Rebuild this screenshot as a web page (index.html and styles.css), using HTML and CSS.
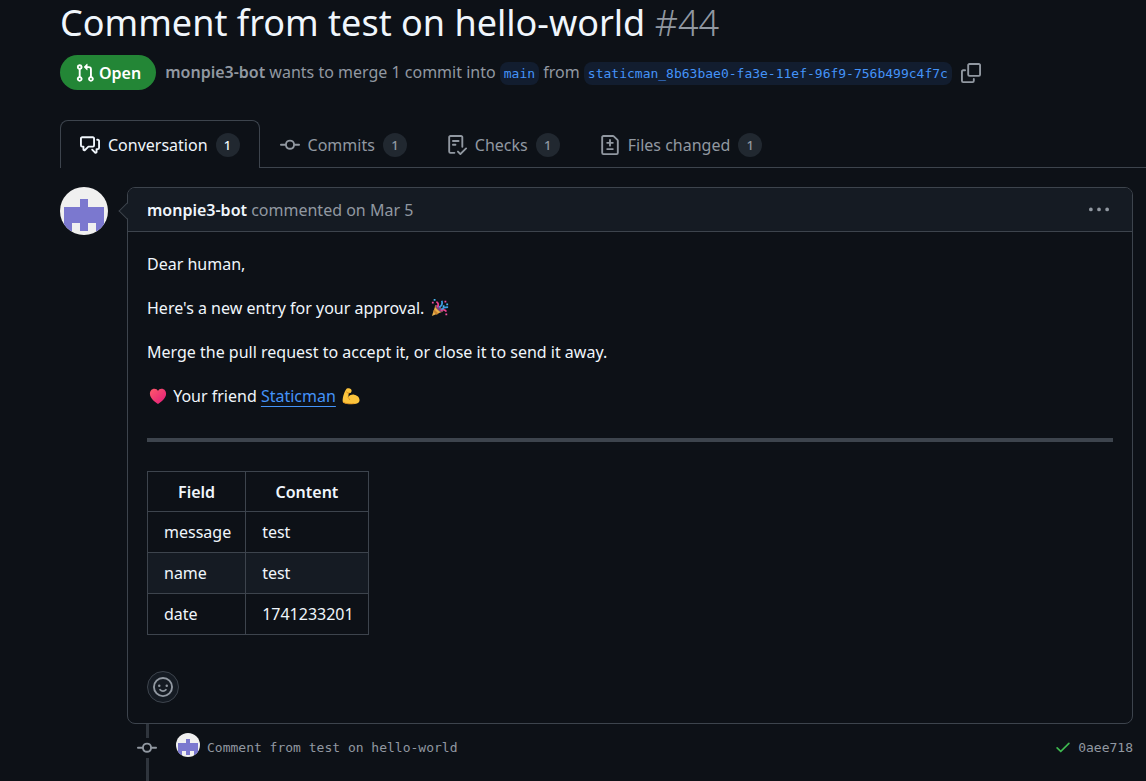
FILE: index.html
```html
<!DOCTYPE html>
<html lang="en">
<head>
  <meta charset="UTF-8" />
  <meta name="viewport" content="width=device-width, initial-scale=1.0"/>
  <title>Comment from test on hello-world #44</title>
  <link rel="stylesheet" href="styles.css">
</head>
<body>

  <!-- shared pixel avatar and commit icon -->
  <svg class="defs" width="0" height="0" aria-hidden="true">
    <symbol id="avatar" viewBox="0 0 48 48">
      <rect width="48" height="48" fill="#f0f0f0"/>
      <path fill="#7b78cf" d="M20 12h8v8h16v24h-8v-8h-8v8h-8v-8h-8v8H4V20h16z"/>
    </symbol>
    <symbol id="commit" viewBox="0 0 16 16">
      <path d="M11.93 8.5a4.002 4.002 0 0 1-7.86 0H.75a.75.75 0 0 1 0-1.5h3.32a4.002 4.002 0 0 1 7.86 0h3.32a.75.75 0 0 1 0 1.5Zm-1.43-.75a2.5 2.5 0 1 0-5 0 2.5 2.5 0 0 0 5 0Z"/>
    </symbol>
  </svg>

  <header class="pr-header">
    <h1>Comment from test on hello-world <span class="number">#44</span></h1>
    <div class="pr-meta">
      <span class="state">
        <svg class="icon" viewBox="0 0 16 16"><path d="M1.5 3.25a2.25 2.25 0 1 1 3 2.122v5.256a2.251 2.251 0 1 1-1.5 0V5.372A2.25 2.25 0 0 1 1.5 3.25Zm5.677-.177L9.573.677A.25.25 0 0 1 10 .854V2.5h1A2.5 2.5 0 0 1 13.5 5v5.628a2.251 2.251 0 1 1-1.5 0V5a1 1 0 0 0-1-1h-1v1.646a.25.25 0 0 1-.427.177L7.177 3.427a.25.25 0 0 1 0-.354ZM3.75 2.5a.75.75 0 1 0 0 1.5.75.75 0 0 0 0-1.5Zm0 9.5a.75.75 0 1 0 0 1.5.75.75 0 0 0 0-1.5Zm8.25.75a.75.75 0 1 0 1.5 0 .75.75 0 0 0-1.5 0Z"/></svg>
        Open
      </span>
      <p class="merge-info">
        <a class="author" href="#">monpie3-bot</a> wants to merge 1 commit into
        <a class="branch" href="#">main</a> from
        <a class="branch" href="#">staticman_8b63bae0-fa3e-11ef-96f9-756b499c4f7c</a>
      </p>
      <button class="icon-btn" type="button" aria-label="Copy branch name">
        <svg class="icon" viewBox="0 0 16 16"><path d="M0 6.75C0 5.784.784 5 1.75 5h1.5a.75.75 0 0 1 0 1.5h-1.5a.25.25 0 0 0-.25.25v7.5c0 .138.112.25.25.25h7.5a.25.25 0 0 0 .25-.25v-1.5a.75.75 0 0 1 1.5 0v1.5A1.75 1.75 0 0 1 9.25 16h-7.5A1.75 1.75 0 0 1 0 14.25Z"/><path d="M5 1.75C5 .784 5.784 0 6.75 0h7.5C15.216 0 16 .784 16 1.75v7.5A1.75 1.75 0 0 1 14.25 11h-7.5A1.75 1.75 0 0 1 5 9.25Zm1.75-.25a.25.25 0 0 0-.25.25v7.5c0 .138.112.25.25.25h7.5a.25.25 0 0 0 .25-.25v-7.5a.25.25 0 0 0-.25-.25Z"/></svg>
      </button>
    </div>
  </header>

  <nav class="tabs" aria-label="Pull request">
    <a class="tab selected" href="#" aria-current="page">
      <svg class="icon" viewBox="0 0 16 16"><path d="M1.75 1h8.5c.966 0 1.75.784 1.75 1.75v5.5A1.75 1.75 0 0 1 10.25 10H7.061l-2.574 2.573A1.458 1.458 0 0 1 2 11.543V10h-.25A1.75 1.75 0 0 1 0 8.25v-5.5C0 1.784.784 1 1.75 1ZM1.5 2.75v5.5c0 .138.112.25.25.25h1a.75.75 0 0 1 .75.75v2.19l2.72-2.72a.749.749 0 0 1 .53-.22h3.5a.25.25 0 0 0 .25-.25v-5.5a.25.25 0 0 0-.25-.25h-8.5a.25.25 0 0 0-.25.25Zm13 2a.25.25 0 0 0-.25-.25h-.5a.75.75 0 0 1 0-1.5h.5c.966 0 1.75.784 1.75 1.75v5.5A1.75 1.75 0 0 1 14.25 12H14v1.543a1.458 1.458 0 0 1-2.487 1.03L9.22 12.28a.749.749 0 0 1 .326-1.275.749.749 0 0 1 .734.215l2.22 2.22v-2.19a.75.75 0 0 1 .75-.75h1a.25.25 0 0 0 .25-.25Z"/></svg>
      Conversation <span class="counter">1</span>
    </a>
    <a class="tab" href="#">
      <svg class="icon"><use href="#commit"/></svg>
      Commits <span class="counter">1</span>
    </a>
    <a class="tab" href="#">
      <svg class="icon" viewBox="0 0 16 16"><path d="M2.5 1.75v11.5c0 .138.112.25.25.25h3.17a.75.75 0 0 1 0 1.5H2.75A1.75 1.75 0 0 1 1 13.25V1.75C1 .784 1.784 0 2.75 0h8.5C12.216 0 13 .784 13 1.75v7.736a.75.75 0 0 1-1.5 0V1.75a.25.25 0 0 0-.25-.25h-8.5a.25.25 0 0 0-.25.25Zm13.274 9.537v-.001l-4.557 4.45a.75.75 0 0 1-1.055-.008l-1.943-1.95a.75.75 0 0 1 1.062-1.058l1.419 1.425 4.026-3.932a.75.75 0 1 1 1.048 1.074ZM4.75 4h4.5a.75.75 0 0 1 0 1.5h-4.5a.75.75 0 0 1 0-1.5ZM4 7.75A.75.75 0 0 1 4.75 7h2a.75.75 0 0 1 0 1.5h-2A.75.75 0 0 1 4 7.75Z"/></svg>
      Checks <span class="counter">1</span>
    </a>
    <a class="tab" href="#">
      <svg class="icon" viewBox="0 0 16 16"><path d="M1 1.75C1 .784 1.784 0 2.75 0h7.586c.464 0 .909.184 1.237.513l2.914 2.914c.329.328.513.773.513 1.237v9.586A1.75 1.75 0 0 1 13.25 16H2.75A1.75 1.75 0 0 1 1 14.25Zm1.75-.25a.25.25 0 0 0-.25.25v12.5c0 .138.112.25.25.25h10.5a.25.25 0 0 0 .25-.25V4.664a.25.25 0 0 0-.073-.177l-2.914-2.914a.25.25 0 0 0-.177-.073ZM8 3.25a.75.75 0 0 1 .75.75v1.5h1.5a.75.75 0 0 1 0 1.5h-1.5v1.5a.75.75 0 0 1-1.5 0V7h-1.5a.75.75 0 0 1 0-1.5h1.5V4A.75.75 0 0 1 8 3.25Zm-3 8a.75.75 0 0 1 .75-.75h4.5a.75.75 0 0 1 0 1.5h-4.5a.75.75 0 0 1-.75-.75Z"/></svg>
      Files changed <span class="counter">1</span>
    </a>
  </nav>

  <main class="discussion">
    <div class="comment-row">
      <svg class="avatar" role="img" aria-label="monpie3-bot"><use href="#avatar"/></svg>
      <article class="comment">
        <header class="comment-header">
          <p><a class="author" href="#">monpie3-bot</a> commented on Mar 5</p>
          <button class="icon-btn" type="button" aria-label="Show options">
            <svg class="icon" viewBox="0 0 16 16"><path d="M8 9a1.5 1.5 0 1 0 0-3 1.5 1.5 0 0 0 0 3ZM1.5 9a1.5 1.5 0 1 0 0-3 1.5 1.5 0 0 0 0 3Zm13 0a1.5 1.5 0 1 0 0-3 1.5 1.5 0 0 0 0 3Z"/></svg>
          </button>
        </header>

        <div class="comment-body">
          <p>Dear human,</p>
          <p>Here's a new entry for your approval.
            <svg class="emoji" viewBox="0 0 20 20" role="img" aria-label="party popper">
              <path fill="#e8b04a" d="M5 7 1 19l12-5C12 10 9 7 5 7z"/>
              <path fill="#c9822d" d="m3.500 11.500 5 5-2.500 1-3.500-3.500zM5 7l8 7-2 1-7-6z"/>
              <ellipse cx="9" cy="10.500" rx="2" ry="5" transform="rotate(-45 9 10.500)" fill="#7a3f7d"/>
              <path fill="none" stroke="#e8418c" stroke-width="2" d="M7 9c2-2 1-5-1-6M11 13c2-2 5-1 6 1"/>
              <path fill="none" stroke="#3d9be0" stroke-width="2" d="M9 9c3-1 4-4 3-7M12 12c1-3 4-3 7-3"/>
              <path fill="#f04fa0" d="M1 3h2v2H1zM15 2h2v2h-2zM16 16h2v2h-2z"/>
              <path fill="#49b6ef" d="M3 0h2v2H3zM17 5h2v2h-2zM13 7h2v2h-2z"/>
            </svg></p>
          <p>Merge the pull request to accept it, or close it to send it away.</p>
          <p><svg class="emoji" viewBox="0 0 20 20" role="img" aria-label="heart">
              <defs><linearGradient id="heart" x1="0" y1="0" x2="1" y2="1"><stop offset="0" stop-color="#ff5a6b"/><stop offset="1" stop-color="#e0197a"/></linearGradient></defs>
              <path fill="url(#heart)" d="M10 19C7 17 1 12.500 1 7.500 1 4.500 3 2 6 2c2 0 3.200 1 4 2.500C10.800 3 12 2 14 2c3 0 5 2.500 5 5.500C19 12.500 13 17 10 19z"/>
            </svg>
            Your friend <a class="link" href="#">Staticman</a>
            <svg class="emoji" viewBox="0 0 20 20" role="img" aria-label="flexed biceps">
              <path fill="#fcc43c" d="M5 2c2-1 4-.5 5 .5 1 1 .8 2.500 0 3.500-.8.800-2 .8-2.500.8L7 11c2-2 4-3 6.500-2.500C17 9 19.500 11.500 19.500 14.500c0 3-2.500 4.500-7 4.500C7 19 2 18.500 1 17 0 14 2 6 5 2z"/>
              <path fill="none" stroke="#dd8d1c" stroke-linecap="round" d="M5 5.500c1 1 2 1.300 3 1.200M6.500 11.500c1 .5 2 1.500 2 2.500M1.500 17c3 2 8 2 12 1.500"/>
            </svg></p>

          <hr>

          <table>
            <thead>
              <tr><th>Field</th><th>Content</th></tr>
            </thead>
            <tbody>
              <tr><td>message</td><td>test</td></tr>
              <tr><td>name</td><td>test</td></tr>
              <tr><td>date</td><td>1741233201</td></tr>
            </tbody>
          </table>

          <button class="reaction" type="button" aria-label="Add reaction">
            <svg class="icon" viewBox="0 0 16 16">
              <path d="M8 0a8 8 0 1 1 0 16A8 8 0 0 1 8 0ZM1.500 8a6.500 6.500 0 1 0 13 0 6.500 6.500 0 0 0-13 0Z"/>
              <circle cx="5" cy="7" r="1"/><circle cx="11" cy="7" r="1"/>
              <path d="M5.700 10.200c1.200 1.400 3.400 1.400 4.600 0" fill="none" stroke="currentColor" stroke-width="1.500" stroke-linecap="round"/>
            </svg>
          </button>
        </div>
      </article>
    </div>

    <div class="commit-row">
      <div class="timeline">
        <svg class="icon"><use href="#commit"/></svg>
      </div>
      <svg class="avatar small" role="img" aria-label="monpie3-bot"><use href="#avatar"/></svg>
      <a class="message" href="#">Comment from test on hello-world</a>
      <svg class="icon check" viewBox="0 0 16 16" role="img" aria-label="Success"><path d="M13.780 4.220a.75.75 0 0 1 0 1.060l-7.250 7.250a.75.75 0 0 1-1.060 0L2.220 9.280a.751.751 0 0 1 .018-1.042.751.751 0 0 1 1.042-.018L6 10.940l6.720-6.720a.75.75 0 0 1 1.060 0Z"/></svg>
      <a class="sha" href="#">0aee718</a>
    </div>
  </main>

</body>
</html>
```

FILE: styles.css
```css
* {
  box-sizing: border-box;
}

body {
  margin: 0;
  min-height: 100vh;
  display: flex;
  flex-direction: column;
  background: #0d1117;
  color: #f0f6fc;
  font-family: "Segoe UI", "Noto Sans", sans-serif;
  font-size: 16px;
  line-height: 26px;
}

h1, p {
  margin: 0;
}

a {
  color: inherit;
  text-decoration: none;
}

button {
  padding: 0;
  border: 0;
  background: none;
  color: #9198a1;
  cursor: pointer;
}

.defs {
  position: absolute;
}

.icon {
  width: 20px;
  height: 20px;
  flex-shrink: 0;
  display: block;
  fill: currentColor;
}

.icon-btn {
  height: 20px;
}

.author {
  font-weight: 600;
}

/* header */
.pr-header {
  padding: 0 12px 0 60px;
}

h1 {
  font-size: 36px;
  font-weight: 400;
  line-height: 46px;
}

.number {
  color: #9198a1;
  font-weight: 300;
}

.pr-meta {
  display: flex;
  align-items: center;
  gap: 9px;
  margin-top: 9px;
  color: #9198a1;
}

.state {
  display: flex;
  align-items: center;
  gap: 4px;
  height: 35px;
  padding: 0 15px;
  border-radius: 18px;
  background: #238636;
  color: #fff;
  font-weight: 600;
}

.branch {
  padding: 4px;
  border-radius: 8px;
  background: #121d2f;
  color: #4493f8;
  font-family: Consolas, "DejaVu Sans Mono", monospace;
  font-size: 13px;
}

/* tabs */
.tabs {
  display: flex;
  height: 48px;
  margin: 30px 0 0 60px;
  box-shadow: inset 0 -1px #3d444d;
}

.tab {
  display: flex;
  align-items: center;
  gap: 8px;
  padding: 0 19px;
  border: 1px solid transparent;
  border-bottom: 0;
  color: #9198a1;
}

.tab.selected {
  border-color: #3d444d;
  border-radius: 8px 8px 0 0;
  background: #0d1117;
  color: #f0f6fc;
}

.counter {
  min-width: 24px;
  border-radius: 12px;
  background: #212830;
  font-size: 13px;
  font-weight: 500;
  line-height: 24px;
  text-align: center;
}

/* discussion */
.discussion {
  flex: 1;
  display: flex;
  flex-direction: column;
  padding: 19px 13px 0 60px;
}

.comment-row {
  display: flex;
  gap: 19px;
}

.avatar {
  width: 48px;
  height: 48px;
  flex-shrink: 0;
  border-radius: 50%;
}

.avatar.small {
  width: 24px;
  height: 24px;
}

.comment {
  position: relative;
  flex: 1;
  border: 1px solid #3d444d;
  border-radius: 8px;
}

.comment-header {
  display: flex;
  align-items: center;
  justify-content: space-between;
  height: 44px;
  padding: 0 23px 0 19px;
  border-bottom: 1px solid #3d444d;
  border-radius: 7px 7px 0 0;
  background: #151b23;
  color: #9198a1;
}

.comment-header .author {
  color: #f0f6fc;
}

/* arrow that points at the avatar */
.comment::before {
  content: "";
  position: absolute;
  top: 17px;
  left: -7px;
  width: 11px;
  height: 11px;
  border: 1px solid #3d444d;
  border-width: 0 0 1px 1px;
  background: linear-gradient(45deg, #151b23 60%, transparent 60%);
  transform: rotate(45deg);
}

.comment-body {
  padding: 19px 19px 20px;
}

.comment-body p {
  margin-bottom: 18px;
}

.emoji {
  width: 18px;
  height: 18px;
  margin: 0 2px;
  vertical-align: -3px;
}

.link {
  color: #4493f8;
  text-decoration: underline;
  text-underline-offset: 4px;
}

hr {
  height: 4px;
  margin: 29px 0;
  border: 0;
  background: #3d444d;
}

table {
  border-collapse: collapse;
}

th, td {
  padding: 7px 14px 7px 16px;
  border: 1px solid #3d444d;
  text-align: left;
}

th {
  padding: 7px 28px 6px;
  font-weight: 600;
  text-align: center;
}

tbody tr:nth-child(2) {
  background: #151b23;
}

.reaction {
  display: grid;
  place-items: center;
  width: 32px;
  height: 32px;
  margin-top: 36px;
  border: 1px solid #3d444d;
  border-radius: 50%;
  background: #151b23;
}

/* commit under the comment */
.commit-row {
  flex: 1;
  display: flex;
  align-items: flex-start;
  padding-left: 77px;
  color: #9198a1;
  font-family: Consolas, "DejaVu Sans Mono", monospace;
  font-size: 13px;
}

.timeline {
  align-self: stretch;
  display: flex;
  flex-direction: column;
  align-items: center;
  margin-right: 19px;
}

.timeline::before,
.timeline::after {
  content: "";
  width: 3px;
  height: 14px;
  background: #2f353d;
}

.timeline::after {
  height: auto;
  flex: 1;
}

.commit-row .small {
  margin: 9px 7px 0 0;
}

.message {
  flex: 1;
  margin-top: 11px;
}

.check {
  width: 18px;
  height: 18px;
  margin: 14px 6px 0 0;
  color: #3fb950;
}

.sha {
  margin-top: 11px;
}
```
